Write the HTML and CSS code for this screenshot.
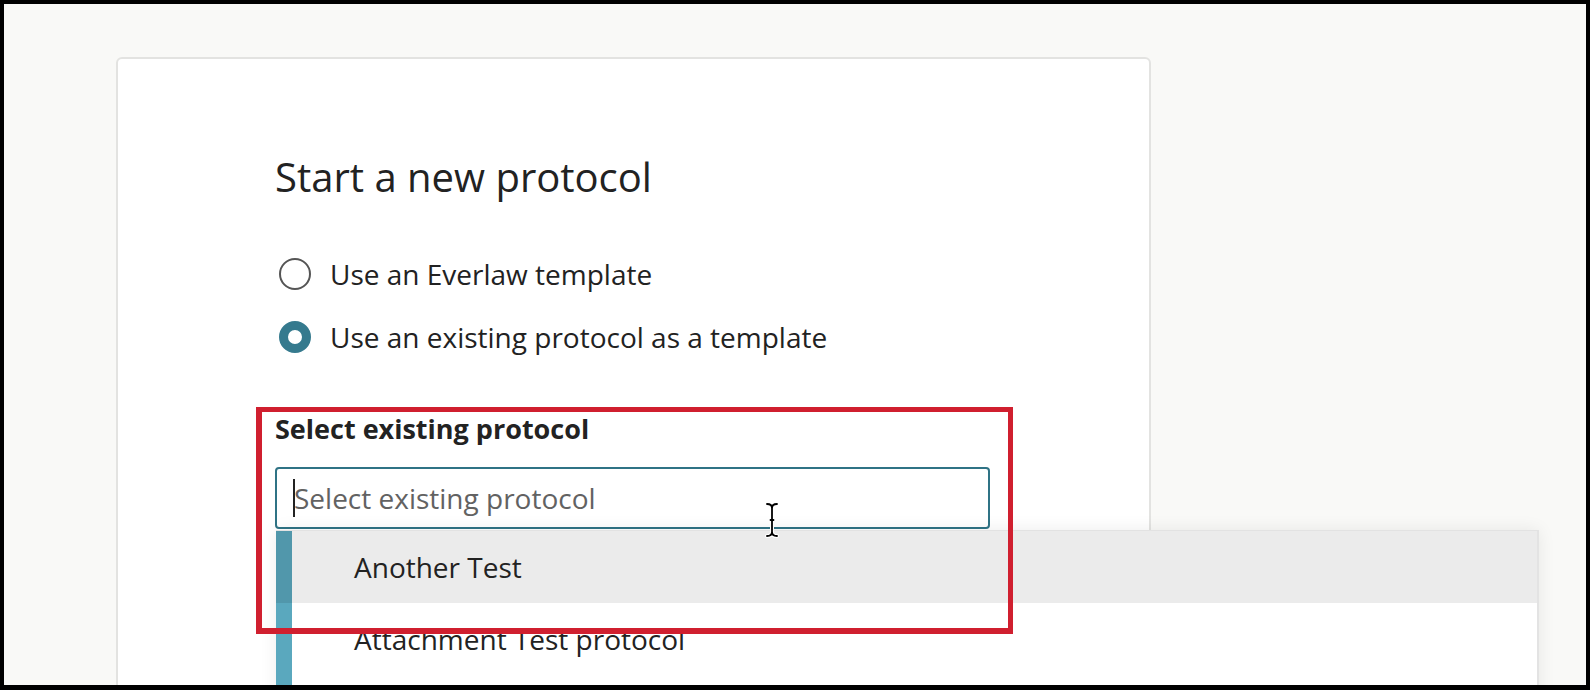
FILE: index.html
```html
<!DOCTYPE html>
<html lang="en">
<head>
<meta charset="utf-8">
<title>Start a new protocol</title>
<link rel="stylesheet" href="styles.css">
</head>
<body>
<div class="screen">
  <div class="card">
    <h1 class="title">Start a new protocol</h1>
    <div class="options">
      <div class="option">
        <span class="radio"></span>
        <span class="option-text">Use an Everlaw template</span>
      </div>
      <div class="option">
        <span class="radio radio-on"></span>
        <span class="option-text">Use an existing protocol as a template</span>
      </div>
    </div>
    <div class="field-label">Select existing protocol</div>
    <div class="field">
      <div class="input"><span class="caret"></span><span class="placeholder">Select existing protocol</span></div>
      <div class="menu">
        <div class="menu-item active">Another Test</div>
        <div class="menu-item">Attachment Test protocol</div>
        <div class="menu-item menu-filler"></div>
      </div>
    </div>
  </div>
  <div class="annotation"></div>
  <svg class="ibeam" width="18" height="38" viewBox="0 0 18 38">
    <g fill="none" stroke="#fff" stroke-width="4" stroke-linecap="round">
      <path d="M4 3 Q9 3 9 7 Q9 3 14 3"/>
      <path d="M9 7 V31"/>
      <path d="M4 35 Q9 35 9 31 Q9 35 14 35"/>
    </g>
    <g fill="none" stroke="#000" stroke-width="1.8" stroke-linecap="round">
      <path d="M4 3 Q9 3 9 7 Q9 3 14 3"/>
      <path d="M9 7 V31"/>
      <path d="M4 35 Q9 35 9 31 Q9 35 14 35"/>
      <path d="M7.5 19 H10.5"/>
    </g>
  </svg>
</div>
</body>
</html>
```
FILE: styles.css
```css
html, body {
  margin: 0;
  padding: 0;
  background: #000;
}

.screen {
  position: relative;
  margin: 4px 4px 0 4px;
  height: 681px;
  background: #f9f9f7;
  overflow: hidden;
  padding: 53px 0 0 112px;
  box-sizing: border-box;
  font-family: "Open Sans", "Liberation Sans", sans-serif;
  color: #222;
}

.card {
  width: 1035px;
  height: 700px;
  box-sizing: border-box;
  background: #fff;
  border: 2px solid #e3e3e1;
  border-radius: 6px;
  padding: 91px 0 0 157px;
}

.title {
  margin: 0;
  font-size: 40px;
  line-height: 54px;
  font-weight: 400;
  color: #222;
}

.options {
  margin-top: 50px;
  display: flex;
  flex-direction: column;
  gap: 23px;
}

.option {
  display: flex;
  align-items: center;
  gap: 19px;
  height: 40px;
}

.radio {
  width: 32px;
  height: 32px;
  margin-left: 4px;
  box-sizing: border-box;
  border: 2px solid #555;
  border-radius: 50%;
  background: #fff;
  flex: none;
}

.radio-on {
  border: 9px solid #357a8e;
}

.option-text {
  font-size: 28px;
  line-height: 40px;
}

.field-label {
  margin-top: 53px;
  font-size: 27px;
  line-height: 38px;
  font-weight: 700;
  color: #222;
}

.field {
  position: relative;
  margin-top: 19px;
  width: 715px;
}

.input {
  height: 62px;
  box-sizing: border-box;
  border: 2px solid #2f7385;
  border-radius: 4px;
  background: #fff;
  padding-left: 16px;
  display: flex;
  align-items: center;
}

.caret {
  display: inline-block;
  width: 2px;
  height: 38px;
  background: #222;
  margin-right: -1px;
}

.placeholder {
  font-size: 28px;
  line-height: 38px;
  color: #626262;
}

.menu {
  position: absolute;
  top: 63px;
  left: 1px;
  width: 1261px;
  background: #fff;
  border-top: 1px solid #e2e2e2;
  border-right: 2px solid #e3e3e3;
  box-shadow: 0 0 16px rgba(0, 0, 0, 0.08);
  z-index: 2;
}

.menu-item {
  border-left: 16px solid #5aa8be;
  padding: 17px 0 17px 62px;
  font-size: 28px;
  line-height: 38px;
  color: #222;
  background: #fff;
}

.menu-item.active {
  background: #ebebeb;
  border-left-color: #5197ab;
}

.menu-filler {
  height: 38px;
}

.annotation {
  position: absolute;
  left: 252px;
  top: 403px;
  width: 757px;
  height: 227px;
  box-sizing: border-box;
  border: 5px solid #d01f2f;
  border-left-width: 6px;
  border-bottom-width: 6px;
  z-index: 3;
}

.ibeam {
  position: absolute;
  left: 759px;
  top: 497px;
  z-index: 4;
}
```
